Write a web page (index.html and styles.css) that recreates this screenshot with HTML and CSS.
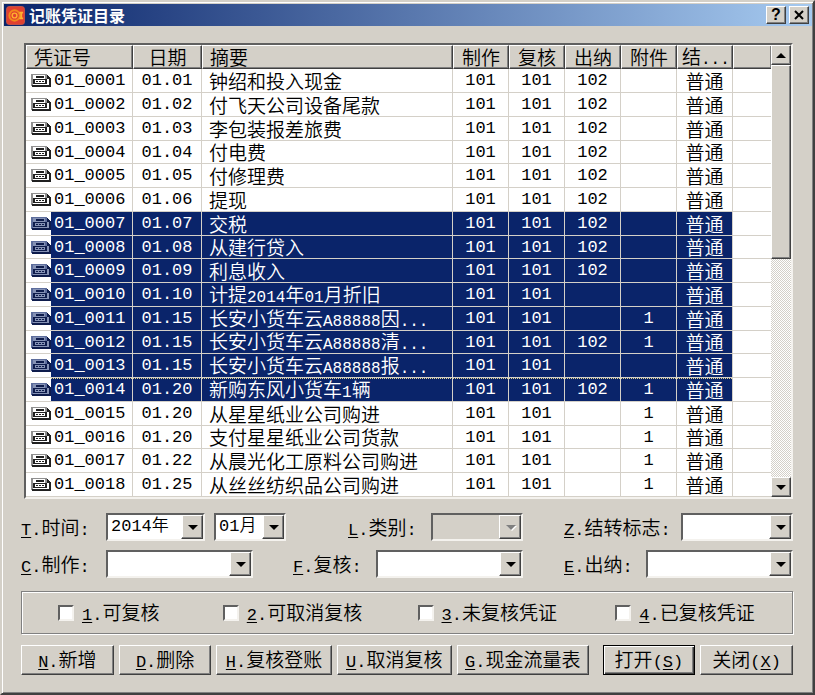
FILE: index.html
```html
<!DOCTYPE html>
<html lang="zh-CN">
<head>
  <meta charset="UTF-8">
  <title>记账凭证目录</title>
  <link rel="stylesheet" href="styles.css">
</head>
<body>
  <svg class="defs" aria-hidden="true">
    <symbol id="voucher" viewBox="0 0 20 14">
      <path class="paper" d="M1 1h15l3 3v9H1z"/>
      <path class="edge" d="M0 0h16v1H2v11H0zM14 1h2v3h3v1h-5z"/>
      <path class="ink" d="M1 11h17v2H1zM16 1h1v1h1v1h1v1h1v9h-2V5h-2zM5 2h8v2H5zM2 5h14v1H2zM2 5h2v5H2zM14 5h2v5h-2zM2 9h14v1H2zM5 7h2v1H5zM8 7h2v1H8zM11 7h2v1h-2z"/>
    </symbol>
  </svg>

  <div class="window">
    <header class="titlebar">
      <svg class="logo" viewBox="0 0 20 20" aria-hidden="true">
        <rect width="20" height="20" rx="4" fill="#c05048"/>
        <rect x="1" y="1" width="18" height="18" rx="3" fill="#e04030"/>
        <circle cx="9" cy="10" r="5.5" fill="none" stroke="#f08a1c" stroke-width="2"/>
        <circle cx="9" cy="10" r="2.5" fill="none" stroke="#ffb02e" stroke-width="1.5"/>
        <path d="M14 6h4v2h-1v4h1v2h-4v-2h1V8h-1z" fill="#ffb02e"/>
      </svg>
      <h1>记账凭证目录</h1>
      <button class="tool" aria-label="帮助">?</button>
      <button class="tool" aria-label="关闭">
        <svg viewBox="0 0 12 10" width="12" height="10"><path d="M2 1l8 8M10 1l-8 8" stroke="#000" stroke-width="2"/></svg>
      </button>
    </header>

    <main>
      <div class="list">
        <table>
          <colgroup>
            <col class="c-no"><col class="c-date"><col>
            <col class="c-num"><col class="c-num"><col class="c-num"><col class="c-num"><col class="c-num">
            <col class="c-rest">
          </colgroup>
          <thead>
            <tr>
              <th class="left">凭证号</th><th>日期</th><th class="left">摘要</th>
              <th>制作</th><th>复核</th><th>出纳</th><th>附件</th><th class="cut">结<span class="n">...</span></th><th></th>
            </tr>
          </thead>
          <tbody id="rows"></tbody>
        </table>
        <div class="scrollbar">
          <button class="arrow up" aria-label="向上"></button>
          <div class="thumb"></div>
          <button class="arrow down" aria-label="向下"></button>
        </div>
      </div>

      <form onsubmit="return false">
        <div class="filters">
          <div class="field">
            <label for="year"><u>T</u><i>.</i>时间<i>:</i></label>
            <span class="combo w-year"><select id="year"><option>2014年</option></select></span>
            <span class="combo w-month"><select id="month" aria-label="月份"><option>01月</option></select></span>
          </div>
          <div class="field mid">
            <label for="kind"><u>L</u><i>.</i>类别<i>:</i></label>
            <span class="combo w-kind off"><select id="kind" disabled><option></option></select></span>
          </div>
          <div class="field end">
            <label for="carry"><u>Z</u><i>.</i>结转标志<i>:</i></label>
            <span class="combo w-carry"><select id="carry"><option></option></select></span>
          </div>
          <div class="field">
            <label for="maker"><u>C</u><i>.</i>制作<i>:</i></label>
            <span class="combo w-user"><select id="maker"><option></option></select></span>
          </div>
          <div class="field mid">
            <label for="checker"><u>F</u><i>.</i>复核<i>:</i></label>
            <span class="combo w-user"><select id="checker"><option></option></select></span>
          </div>
          <div class="field end">
            <label for="cashier"><u>E</u><i>.</i>出纳<i>:</i></label>
            <span class="combo w-user"><select id="cashier"><option></option></select></span>
          </div>
        </div>

        <div class="states">
          <label><input type="checkbox"><span><u>1</u><i>.</i>可复核</span></label>
          <label><input type="checkbox"><span><u>2</u><i>.</i>可取消复核</span></label>
          <label><input type="checkbox"><span><u>3</u><i>.</i>未复核凭证</span></label>
          <label><input type="checkbox"><span><u>4</u><i>.</i>已复核凭证</span></label>
        </div>

        <div class="actions">
          <button class="btn s"><u>N</u><i>.</i>新增</button>
          <button class="btn s"><u>D</u><i>.</i>删除</button>
          <button class="btn m"><u>H</u><i>.</i>复核登账</button>
          <button class="btn m"><u>U</u><i>.</i>取消复核</button>
          <button class="btn l"><u>G</u><i>.</i>现金流量表</button>
          <button class="btn s default">打开<i>(</i><u>S</u><i>)</i></button>
          <button class="btn s">关闭<i>(</i><u>X</u><i>)</i></button>
        </div>
      </form>
    </main>
  </div>

  <script>
    // 日期, 摘要, 出纳, 附件
    const vouchers = [
      ['01.01', '钟绍和投入现金', '102', ''],
      ['01.02', '付飞天公司设备尾款', '102', ''],
      ['01.03', '李包装报差旅费', '102', ''],
      ['01.04', '付电费', '102', ''],
      ['01.05', '付修理费', '102', ''],
      ['01.06', '提现', '102', ''],
      ['01.07', '交税', '102', ''],
      ['01.08', '从建行贷入', '102', ''],
      ['01.09', '利息收入', '102', ''],
      ['01.10', '计提2014年01月折旧', '', ''],
      ['01.15', '长安小货车云A88888因...', '', '1'],
      ['01.15', '长安小货车云A88888清...', '102', '1'],
      ['01.15', '长安小货车云A88888报...', '', ''],
      ['01.20', '新购东风小货车1辆', '102', '1'],
      ['01.20', '从星星纸业公司购进', '', '1'],
      ['01.20', '支付星星纸业公司货款', '', '1'],
      ['01.22', '从晨光化工原料公司购进', '', '1'],
      ['01.25', '从丝丝纺织品公司购进', '', '1']
    ];
    const selFrom = 7, selTo = 14;

    const body = document.getElementById('rows');
    vouchers.forEach(([date, text, cashier, files], i) => {
      const no = i + 1;
      const tr = document.createElement('tr');
      if (no >= selFrom && no <= selTo) tr.classList.add('selected');
      if (no === selTo) tr.classList.add('focus');
      const summary = text.replace(/[\x21-\x7e]+/g, s => `<span class="n">${s}</span>`);
      tr.innerHTML = `
        <td class="no"><div><svg class="icon"><use href="#voucher"/></svg><span>01_${String(no).padStart(4, '0')}</span></div></td>
        <td class="num">${date}</td>
        <td class="text">${summary}</td>
        <td class="num">101</td>
        <td class="num">101</td>
        <td class="num">${cashier}</td>
        <td class="num">${files}</td>
        <td class="type">普通</td>
        <td class="rest"></td>`;
      body.appendChild(tr);
    });
  </script>
</body>
</html>
```
FILE: styles.css
```css
* { box-sizing: border-box; }
body {
  margin: 0;
  background: #d4d0c8;
  color: #000;
  font: 19px/22px "Noto Sans CJK SC", sans-serif;
  font-weight: 350;
}
button, select { font: inherit; color: inherit; }
u, i, .n, .num, .no {
  font-family: "Liberation Mono", "Noto Sans CJK SC", monospace;
  font-style: normal;
  font-size: 17px;
}
u, i, .n { line-height: 1; }
.n { font-size: 16px; }
u { text-underline-offset: 2px; text-decoration-thickness: 1px; }
.defs { display: none; }

.window {
  min-height: 100vh;
  padding: 2px 1px 2px 2px;
  border: 2px solid;
  border-color: #d4d0c8 #404040 #404040 #d4d0c8;
  box-shadow: inset 1px 1px #fff, inset -1px -1px #808080;
}

.titlebar {
  display: flex;
  align-items: center;
  gap: 2px;
  height: 22px;
  padding: 0 3px 0 2px;
  background: linear-gradient(to right, #0a246a, #a6caf0);
}
.titlebar h1 {
  flex: 1;
  margin: 0 0 0 2px;
  color: #fff;
  font-size: 16px;
  line-height: 20px;
  font-weight: 700;
}
.logo { width: 19px; height: 19px; }
.tool {
  display: flex;
  align-items: center;
  justify-content: center;
  width: 20px;
  height: 18px;
  padding: 0;
  font: bold 16px/16px "Liberation Sans", sans-serif;
}
.tool + .tool { margin-left: 1px; }

.tool, .arrow, .thumb, .btn {
  background: #d4d0c8;
  border: 1px solid;
  border-color: #fff #404040 #404040 #fff;
  box-shadow: inset -1px -1px #808080;
}

main { padding: 17px 19px 16px 17px; }

/* voucher list */
.list {
  display: flex;
  margin-left: 3px;
  background: #fff;
  border: 2px solid;
  border-color: #606060 #f4f2ee #f4f2ee #606060;
}
table {
  flex: 1;
  width: 100%;
  border-collapse: separate;
  border-spacing: 0;
  table-layout: fixed;
}
.c-no { width: 107px; }
.c-date { width: 69px; }
.c-num { width: 56px; }
.c-rest { width: 38px; }
th {
  height: 24px;
  padding: 0;
  line-height: 20px;
  white-space: nowrap;
  font-weight: inherit;
  background: #d4d0c8;
  border: 1px solid;
  border-color: #fff #404040 #404040 #fff;
  box-shadow: inset -1px -1px #808080;
}
th.left { text-align: left; padding-left: 7px; }
th.cut { text-align: left; padding-left: 4px; }
th:last-child { border-right: 0; }
td {
  height: 24px;
  padding: 0;
  line-height: 20px;
  white-space: nowrap;
  text-align: center;
  border-right: 1px solid #d4d0c8;
  border-bottom: 1px solid #d4d0c8;
}
tr:nth-child(4n) td { height: 23px; }
td.rest { border-right: 0; }
td.text { text-align: left; padding-left: 7px; }
td.num, td.no { padding-top: 1px; }
.no div { display: flex; align-items: center; }
.icon {
  --paper: #fff;
  --edge: #909090;
  --ink: #202020;
  flex: none;
  width: 20px;
  height: 14px;
  margin-left: 5px;
}
.no span { flex: 1; padding-left: 3px; text-align: left; }
.paper { fill: var(--paper); }
.edge { fill: var(--edge); }
.ink { fill: var(--ink); }
.selected td:not(.rest) {
  background: #0a246a;
  color: #fff;
}
.selected td.no { background: linear-gradient(to right, #fff 25px, #0a246a 25px); }
.selected .icon {
  --paper: #8592b5;
  --edge: #5d6d9c;
  --ink: #0e1c4c;
}
/* dotted focus line along the top of the current row */
.focus td:not(.rest) {
  background: repeating-linear-gradient(to right, #e8d890 0 1px, #0a246a 1px 2px) 0 0 / 100% 1px no-repeat #0a246a;
}
.focus td.no {
  background:
    repeating-linear-gradient(to right, #e8d890 0 1px, #0a246a 1px 2px) 25px 0 / 100% 1px no-repeat,
    linear-gradient(to right, #fff 25px, #0a246a 25px);
}

.scrollbar {
  display: flex;
  flex-direction: column;
  width: 20px;
  background: repeating-conic-gradient(#fff 0 25%, #d4d0c8 0 50%) 0 0 / 2px 2px;
}
.arrow { height: 20px; padding: 0; display: grid; place-items: center; }
.arrow::after, .combo::after {
  content: "";
  border: 5px solid transparent;
}
.up::after { border-top: 0; border-bottom-color: #000; }
.down::after { border-bottom: 0; border-top-color: #000; }
.down { margin-top: auto; }
.thumb { height: 43%; }

/* filters */
.filters {
  display: grid;
  grid-template-columns: 272fr 271fr 229fr;
  row-gap: 9px;
  margin-top: 14px;
}
.field { display: flex; align-items: center; gap: 9px; }
.field label { min-width: 76px; white-space: nowrap; }
.mid { justify-content: flex-end; padding-right: 41px; }
.mid label { min-width: 74px; }
.end { justify-content: space-between; gap: 0; }
.combo {
  display: grid;
  height: 28px;
  background: #fff;
  border: 2px solid;
  border-color: #606060 #f4f2ee #f4f2ee #606060;
}
.combo select {
  grid-area: 1 / 1;
  width: 100%;
  min-width: 0;
  padding: 0 0 0 3px;
  border: 0;
  appearance: none;
  background: linear-gradient(#d4d0c8, #d4d0c8) right / 20px 100% no-repeat;
  font-family: "Liberation Mono", "Noto Sans CJK SC", monospace;
  font-size: 17px;
}
.combo::before {
  content: "";
  grid-area: 1 / 1;
  justify-self: end;
  z-index: 1;
  width: 20px;
  border: 1px solid;
  border-color: #fff #404040 #404040 #fff;
  box-shadow: inset -1px -1px #808080;
  pointer-events: none;
}
.combo::after {
  grid-area: 1 / 1;
  place-self: center end;
  z-index: 1;
  margin-right: 5px;
  border-bottom: 0;
  border-top-color: #000;
  pointer-events: none;
}
.off { background: #d4d0c8; }
.off::after { border-top-color: #808080; filter: drop-shadow(1px 1px #fff); }
.w-year { width: 99px; }
.w-month { width: 72px; }
.w-kind { width: 92px; }
.w-carry { width: 112px; }
.w-user { width: 147px; }

.states {
  display: grid;
  grid-template-columns: 165fr 195fr 198fr 177fr;
  margin-top: 13px;
  padding: 9px 0 9px 36px;
  border: 1px solid #808080;
  box-shadow: inset 1px 1px #fff, 1px 1px #fff;
}
.states label { display: flex; align-items: center; gap: 8px; white-space: nowrap; }
.states input {
  width: 16px;
  height: 16px;
  margin: 0;
  appearance: none;
  background: #fff;
  border: 2px solid;
  border-color: #606060 #f4f2ee #f4f2ee #606060;
}

.actions { display: flex; gap: 5px; margin-top: 11px; }
.btn {
  flex: 93 1 0;
  height: 30px;
  padding: 0;
  line-height: 20px;
  white-space: nowrap;
}
.btn.m { flex-grow: 116; }
.btn.l { flex-grow: 133; }
.default {
  margin-left: 9px;
  border-color: #000;
  box-shadow: inset 1px 1px #fff, inset -1px -1px #404040, inset -2px -2px #808080;
}
```
